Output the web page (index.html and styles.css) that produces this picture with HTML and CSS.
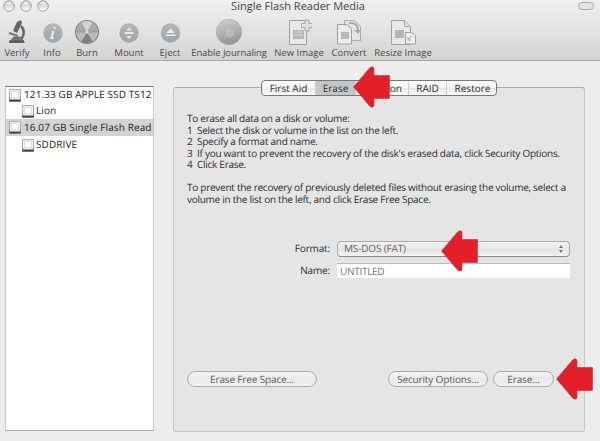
FILE: index.html
```html
<!DOCTYPE html>
<html lang="en">
<head>
<meta charset="utf-8">
<title>Single Flash Reader Media</title>
<link rel="stylesheet" href="styles.css">
</head>
<body>
<svg width="0" height="0" class="defs">
  <defs>
    <linearGradient id="ball" x1="0" y1="0" x2="0" y2="1"><stop offset="0" stop-color="#b5b5b5"/><stop offset="1" stop-color="#a2a4a6"/></linearGradient>
    <linearGradient id="globe" x1="0" y1="0" x2=".3" y2="1"><stop offset="0" stop-color="#d4d4d4"/><stop offset="1" stop-color="#969696"/></linearGradient>
    <linearGradient id="lamp" x1="0" y1="0" x2="0" y2="1"><stop offset="0" stop-color="#bbb"/><stop offset="1" stop-color="#fff"/></linearGradient>
    <symbol id="disk" viewBox="0 0 12 13"><path d="M.5.5h11v12H.5z" fill="#f1f1f1" stroke="#aaa"/><path d="M2.500 2.500h7v6h-7z" fill="#fff" stroke="#ddd"/><path d="M1 10.500h10V12H1z" fill="#444"/><path d="M.5 9v3.500h11V9" fill="none" stroke="#777"/></symbol>
    <symbol id="arrow" viewBox="0 0 37 42"><path d="M.5 21 17 1.500q3-1.500 4 .5v7.500h15.500v23H21V40q-1 2-4 .5z" fill="#e51f29" stroke="#a84046" stroke-width=".6"/></symbol>
    <symbol id="light" viewBox="0 0 12 12"><circle cx="6" cy="6" r="5.300" fill="url(#lamp)" stroke="#a2a2a2"/><ellipse cx="6" cy="3" rx="2.600" ry="1.500" fill="#eee"/></symbol>
  </defs>
</svg>
<header class="chrome">
  <div class="titlebar">
    <div class="lights"><svg><use href="#light"/></svg><svg><use href="#light"/></svg><svg><use href="#light"/></svg></div>
    <h1>Single Flash Reader Media</h1>
    <span class="pill"></span>
  </div>
  <nav class="toolbar">
    <div class="tool"><svg viewBox="0 0 26 28"><path d="m13 3 4-2 1 3-5 10-4-2z" fill="#666"/><path d="m11 7 4 2M17 7q5 5 1 12H9" fill="none" stroke="#666" stroke-width="2.500"/><path d="m5 14 9 3" stroke="#777" stroke-width="2"/><path d="M8 19h10l3 5H5z" fill="#777"/><path d="M5 22.500h15" stroke="#555" stroke-width="2"/></svg><span>Verify</span></div>
    <div class="tool"><svg viewBox="0 0 26 28"><circle cx="14" cy="14" r="9.700" fill="url(#ball)"/><path d="m14.300 12-1.800 7h2M15.500 8v1.800" fill="none" stroke="#eee" stroke-width="2"/></svg><span>Info</span></div>
    <div class="tool"><svg viewBox="0 0 26 28"><circle cx="13" cy="13" r="11.500" fill="#bbb" stroke="#858585" stroke-width="1.200"/><path d="M13 13 7.500 3.500a11 11 0 0 0-5.500 9.500z" fill="#a8a8a8"/><path d="M13 13h11a11 11 0 0 0-5.500-9.500z" fill="#a8a8a8"/><path d="M13 13 7.500 22.500a11 11 0 0 0 11 0z" fill="#808080"/><path d="M13 13 8 3.500a11 11 0 0 1 10 0z" fill="#d4d4d4"/><path d="M3 13h20" stroke="#999"/><circle cx="13" cy="13" r="1.500" fill="#ddd"/></svg><span>Burn</span></div>
    <div class="tool"><svg viewBox="0 0 26 28"><circle cx="13" cy="14" r="9.700" fill="url(#ball)"/><path d="M10 11.500 13 8.500l3 3zM8.500 13h9v2h-9zM10 17l3 3 3-3z" fill="#e8e8e8"/></svg><span>Mount</span></div>
    <div class="tool"><svg viewBox="0 0 26 28"><circle cx="13.500" cy="14" r="9.700" fill="url(#ball)"/><path d="m9 14 4.500-4.500L18 14zM8.500 15.500h10V17h-10z" fill="#eee"/></svg><span>Eject</span></div>
    <div class="tool"><svg viewBox="0 0 26 28"><circle cx="13" cy="13" r="12.700" fill="url(#globe)" stroke="#a5a5a5" stroke-width=".6"/><path d="M9 10q4-3 8 0l2 5-5 4-5-2z" fill="#bdbdbd" stroke="#aaa" stroke-width=".5"/></svg><span class="wide">Enable Journaling</span></div>
    <div class="tool"><svg viewBox="0 0 26 28"><path d="M3.500 1.500h17v24h-17z" fill="#e8e8e8" stroke="#a0a0a0"/><path d="M7 11h11v9H7z" fill="#b5b5b5"/><path d="M8 13h9M8 16h9" stroke="#ddd"/><path d="M19 1h4v3.500h3.500v4H23V12h-4V8.500h-3.500v-4H19z" fill="#e0e0e0" stroke="#999" stroke-width=".8"/></svg><span>New Image</span></div>
    <div class="tool"><svg viewBox="0 0 26 28"><path d="M8.500 1.500h10l6 6v14h-16z" fill="#e5e5e5" stroke="#aaa"/><path d="M1.500 5.500h9l5 4v15.500h-14z" fill="#ececec" stroke="#a0a0a0"/><path d="M5 13h8v7H5z" fill="#b8b8b8"/><path d="M13 4q9-1 9 8" fill="none" stroke="#aaa" stroke-width="2"/><path d="m18 11 4 4 3-4" fill="#aaa"/></svg><span>Convert</span></div>
    <div class="tool"><svg viewBox="0 0 26 28"><path d="M1.500 1.500h13l6 6v18h-19z" fill="#e8e8e8" stroke="#a0a0a0"/><path d="M14.500 1.500v6h6" fill="#ddd" stroke="#aaa"/><path d="M5 11h9v8H5z" fill="#b5b5b5"/><path d="M15.500 13.500h6l4 3v8.500h-10z" fill="#eee" stroke="#a0a0a0"/><path d="m18 21 4-4M18 18v3h3" fill="none" stroke="#aaa"/></svg><span>Resize Image</span></div>
  </nav>
</header>
<main class="content">
  <aside class="disks">
    <div class="disk"><svg><use href="#disk"/></svg><span>121.33 GB APPLE SSD TS12</span></div>
    <div class="disk volume"><svg><use href="#disk"/></svg><span>Lion</span></div>
    <div class="disk selected"><svg><use href="#disk"/></svg><span>16.07 GB Single Flash Read</span></div>
    <div class="disk volume last"><svg><use href="#disk"/></svg><span>SDDRIVE</span></div>
  </aside>
  <section class="panel">
    <div class="tabs"><span>First Aid</span><span class="active">Erase</span><span>Partition</span><span>RAID</span><span>Restore</span>
      <svg class="arrow tab-arrow"><use href="#arrow"/></svg>
    </div>
    <div class="help">
      <p>To erase all data on a disk or volume:</p>
      <p><b>1</b>Select the disk or volume in the list on the left.</p>
      <p><b>2</b>Specify a format and name.</p>
      <p><b>3</b>If you want to prevent the recovery of the disk's erased data, click Security Options.</p>
      <p><b>4</b>Click Erase.</p>
      <p class="gap">To prevent the recovery of previously deleted files without erasing the volume, select a</p>
      <p>volume in the list on the left, and click Erase Free Space.</p>
    </div>
    <div class="form">
      <label>Format:</label>
      <div class="select"><span>MS-DOS (FAT)</span><svg class="step" viewBox="0 0 6 10"><path d="m1 4 2-3 2 3zM1 6l2 3 2-3z" fill="#777"/></svg><svg class="arrow format-arrow"><use href="#arrow"/></svg></div>
      <label>Name:</label>
      <div class="input">UNTITLED</div>
    </div>
    <div class="actions">
      <div class="button free">Erase Free Space...</div>
      <div class="button security">Security Options...</div>
      <div class="button erase">Erase...<svg class="arrow erase-arrow"><use href="#arrow"/></svg></div>
    </div>
  </section>
</main>
</body>
</html>
```

FILE: styles.css
```css
* { box-sizing: border-box; }
body { margin: 0; width: 600px; height: 441px; overflow: hidden; background: #ededed; color: #2c2c2c; font: 500 10px/11.5px "Open Sans", "Noto Sans", sans-serif; text-rendering: geometricPrecision; }
.defs { position: absolute; }
h1, p { margin: 0; }
span, p, label, .button, .input { white-space: nowrap; }
.chrome { height: 61px; background: linear-gradient(#efefef, #e6e6e6 40%, #d3d3d3); border-bottom: 1px solid #a5a5a5; }
.titlebar { height: 18px; display: grid; grid-template-columns: 66px 1fr 66px; }
.lights { display: flex; gap: 5px; padding-left: 3px; }
.lights svg { width: 12px; height: 12px; }
h1 { font-size: 11px; line-height: 14px; font-weight: 500; text-align: center; color: #444; padding-right: 4px; }
.pill { width: 16px; height: 8px; margin: 2px 0 0 44px; border: 1.500px solid #aaa; border-radius: 4px; background: #e3e3e3; }
.toolbar { display: grid; grid-template-columns: 34px 36px 34px 50px 32px 86px 54px 46px 62px; color: #4a4a4a; }
.tool { display: flex; flex-direction: column; align-items: center; }
.tool svg { width: 26px; height: 28px; margin-top: 1px; }
.tool span { font-size: 9.500px; line-height: 12px; }
.tool .wide { letter-spacing: -.1px; }
.content { display: flex; padding: 25px 0 0 5px; }
.disks { width: 149px; height: 345px; background: #fff; border: 1px solid #c8c8c8; border-top-color: #777; border-bottom-color: #aaa; overflow: hidden; }
.disk { height: 16px; display: flex; align-items: center; padding-left: 3px; gap: 3px; color: #222; letter-spacing: .1px; }
.disk svg { width: 12px; height: 13px; flex: none; }
.volume { padding-left: 16px; gap: 2px; }
.selected { height: 17px; background: #d3d3d3; }
.last { height: 18px; }
.panel { width: 412px; height: 345px; margin: 1px 0 0 19px; background: #e5e5e5; border: 1px solid #c6c6c6; border-top-color: #aaa; border-radius: 3px; }
.tabs { position: relative; display: grid; grid-template-columns: 53px 40px 53px 38px 52px; width: 236px; height: 16px; margin: -8px 0 0 87px; border: 1px solid #777; border-radius: 4px; background: linear-gradient(#fff, #f3f3f3 50%, #e9e9e9 51%, #fafafa); }
.tabs span { text-align: center; line-height: 14px; border-left: 1px solid #ccc; }
.tabs span:first-child { border: 0; }
.tabs .active { background: #c6c6c6; }
.arrow { position: absolute; width: 37px; height: 42px; }
.tab-arrow { left: 91px; top: -15px; }
.help { padding: 17px 0 0 13px; height: 113px; letter-spacing: -.27px; }
.help p { height: 11.500px; }
.help b { display: inline-block; width: 10px; font-weight: 500; }
.help .gap { margin-top: 11.500px; }
.form { display: grid; grid-template-columns: 156px 233px; column-gap: 7px; row-gap: 6px; margin-top: 32px; }
.form label { text-align: right; line-height: 14px; letter-spacing: -.15px; }
.select { position: relative; display: flex; justify-content: space-between; align-items: center; height: 16px; padding: 0 5px 0 6px; border: 1px solid #aaa; border-bottom-color: #888; border-radius: 4px; background: linear-gradient(#f3f3f3, #e5e5e5 55%, #f2f2f2); color: #666; letter-spacing: -.15px; }
.step { width: 6px; height: 10px; }
.format-arrow { left: 103px; top: -12px; }
.input { height: 15px; padding-left: 3px; line-height: 15px; background: #fff; border-top: 1px solid #bbb; color: #777; letter-spacing: -.3px; }
.actions { display: flex; margin: 93px 0 0 13px; }
.button { position: relative; height: 16px; border: 1.500px solid #aaa; border-radius: 8px; text-align: center; line-height: 14px; background: linear-gradient(#f5f5f5, #e8e8e8 50%, #f3f3f3); color: #5c5c5c; letter-spacing: -.15px; }
.free { width: 130px; }
.security { width: 100px; margin-left: 71px; }
.erase { width: 61px; margin-left: 5px; }
.erase-arrow { left: 62px; top: -14px; }
```
